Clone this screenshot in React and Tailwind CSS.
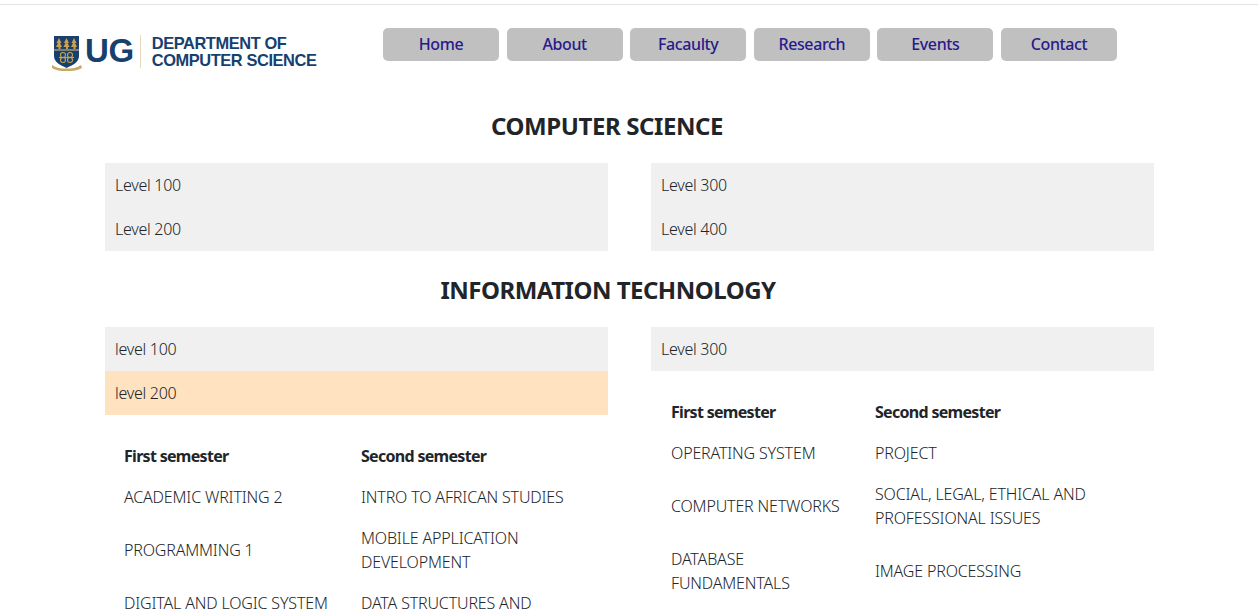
import React from 'react';

const navItems = ['Home', 'About', 'Facaulty', 'Research', 'Events', 'Contact'];

const level200 = [
    ['ACADEMIC WRITING 2', 'INTRO TO AFRICAN STUDIES'],
    ['PROGRAMMING 1', 'MOBILE APPLICATION DEVELOPMENT'],
    ['DIGITAL AND LOGIC SYSTEM DESIGN', 'DATA STRUCTURES AND ALGORITHMS'],
];

const level300 = [
    ['OPERATING SYSTEM', 'PROJECT'],
    ['COMPUTER NETWORKS', 'SOCIAL, LEGAL, ETHICAL AND PROFESSIONAL ISSUES'],
    ['DATABASE FUNDAMENTALS', 'IMAGE PROCESSING'],
];

function Crest() {
    return (
        <svg width="30" height="36" viewBox="0 0 30 36" className="shrink-0">
            <path d="M2 1h25v20c0 6-6 9-12.500 12C8 30 2 27 2 21z" fill="#17406f" />
            <path d="M2 1h25v15H2z" fill="#1c3f6e" />
            <path d="M7 3l2.500 5-1.500 0 2 4H8.500v2h-2v-2H4l2-4H4.500zM14.500 3l2.500 5-1.500 0 2 4H16v2h-2v-2h-2.500l2-4H12zM22 3l2.500 5-1.500 0 2 4h-1.500v2h-2v-2H19l2-4h-1.500z" fill="#c9a24f" />
            <path d="M2 15h25" stroke="#d9c48a" strokeWidth="1" />
            <g fill="none" stroke="#c9a24f" strokeWidth="1.100">
                <circle cx="11" cy="20" r="2.500" />
                <circle cx="18" cy="20" r="2.500" />
                <circle cx="11" cy="25" r="2.500" />
                <circle cx="18" cy="25" r="2.500" />
                <path d="M7 22.500h15" />
            </g>
            <path d="M0 30c4 3 9 3.500 14.500 3.500S25 33 29 30l1 3c-4 2.500-9 3-15.500 3S4 35.500 0 33z" fill="#c9a96a" />
        </svg>
    );
}

function Logo() {
    return (
        <div className="flex items-center h-[36px] w-[331px] shrink-0 text-[#17406f] font-['Liberation_Sans',sans-serif]">
            <Crest />
            <span className="ml-[3px] mb-[6px] text-[33px] leading-none font-bold">UG</span>
            <div className="ml-[6px] mb-[3px] w-px h-[33px] bg-[#e6d9bd]"></div>
            <div className="ml-[11px] mb-[3px] text-[16.400px] leading-[17px] font-bold">
                <div>DEPARTMENT OF</div>
                <div>COMPUTER SCIENCE</div>
            </div>
        </div>
    );
}

function LevelRow({ children, active }) {
    return (
        <div className={`h-[44px] px-[10px] flex items-center tracking-[-0.28px] ${active ? 'bg-[#ffe2bf]' : 'bg-[#f0f0f0]'}`}>
            {children}
        </div>
    );
}

function CourseTable({ rows, tableClass, firstCol }) {
    return (
        <table className={`mt-[20px] border-collapse ${tableClass}`}>
            <thead>
                <tr>
                    <th className={`${firstCol} px-[9px] py-[8.500px] text-left font-bold leading-[24px] tracking-[-0.7px]`}>First semester</th>
                    <th className="px-[9px] py-[8.500px] text-left font-bold leading-[24px] tracking-[-0.7px]">Second semester</th>
                </tr>
            </thead>
            <tbody>
                {rows.map(row => (
                    <tr key={row[0]}>
                        <td className="px-[9px] py-[8.500px] leading-[24px] tracking-[-0.16px]">{row[0]}</td>
                        <td className="px-[9px] py-[8.500px] leading-[24px] tracking-[-0.16px]">{row[1]}</td>
                    </tr>
                ))}
            </tbody>
        </table>
    );
}

export default function App() {
    return (
        <div className="h-[611px] overflow-hidden bg-white text-[#212529] text-[16px] font-['Noto_Sans',sans-serif] font-[350] tracking-[-0.4px]">
            <div className="mt-[4px] border-t border-[#e3e3e3]"></div>

            {/* Header */}
            <header className="flex items-start pl-[52px] h-[93px]">
                <div className="mt-[30px]">
                    <Logo />
                </div>
                <nav className="flex gap-[7.600px] mt-[23px]">
                    {navItems.map(item => (
                        <a key={item} className="w-[116px] h-[33px] pb-[1px] rounded-[5px] bg-[#c0c0c0] flex items-center justify-center text-[#2a1a8c] font-medium">
                            {item}
                        </a>
                    ))}
                </nav>
            </header>

            <main className="px-[105px] w-[1259px]">
                <h2 className="h-[65px] pt-[10px] pr-[45px] text-center text-[24px] leading-[36px] font-bold">COMPUTER SCIENCE</h2>
                <div className="grid grid-cols-[503px_503px] gap-x-[43px]">
                    <div>
                        <LevelRow>Level 100</LevelRow>
                        <LevelRow>Level 200</LevelRow>
                    </div>
                    <div>
                        <LevelRow>Level 300</LevelRow>
                        <LevelRow>Level 400</LevelRow>
                    </div>
                </div>

                <h2 className="h-[76px] pt-[21px] pr-[43px] text-center text-[24px] leading-[36px] font-bold tracking-[-0.5px]">INFORMATION TECHNOLOGY</h2>
                <div className="grid grid-cols-[503px_503px] gap-x-[43px]">
                    <div>
                        <LevelRow>level 100</LevelRow>
                        <LevelRow active>level 200</LevelRow>
                        <CourseTable rows={level200} tableClass="ml-[10px]" firstCol="w-[237px]" />
                    </div>
                    <div>
                        <LevelRow>Level 300</LevelRow>
                        <CourseTable rows={level300} tableClass="ml-[11px]" firstCol="w-[204px]" />
                    </div>
                </div>
            </main>
        </div>
    );
}
